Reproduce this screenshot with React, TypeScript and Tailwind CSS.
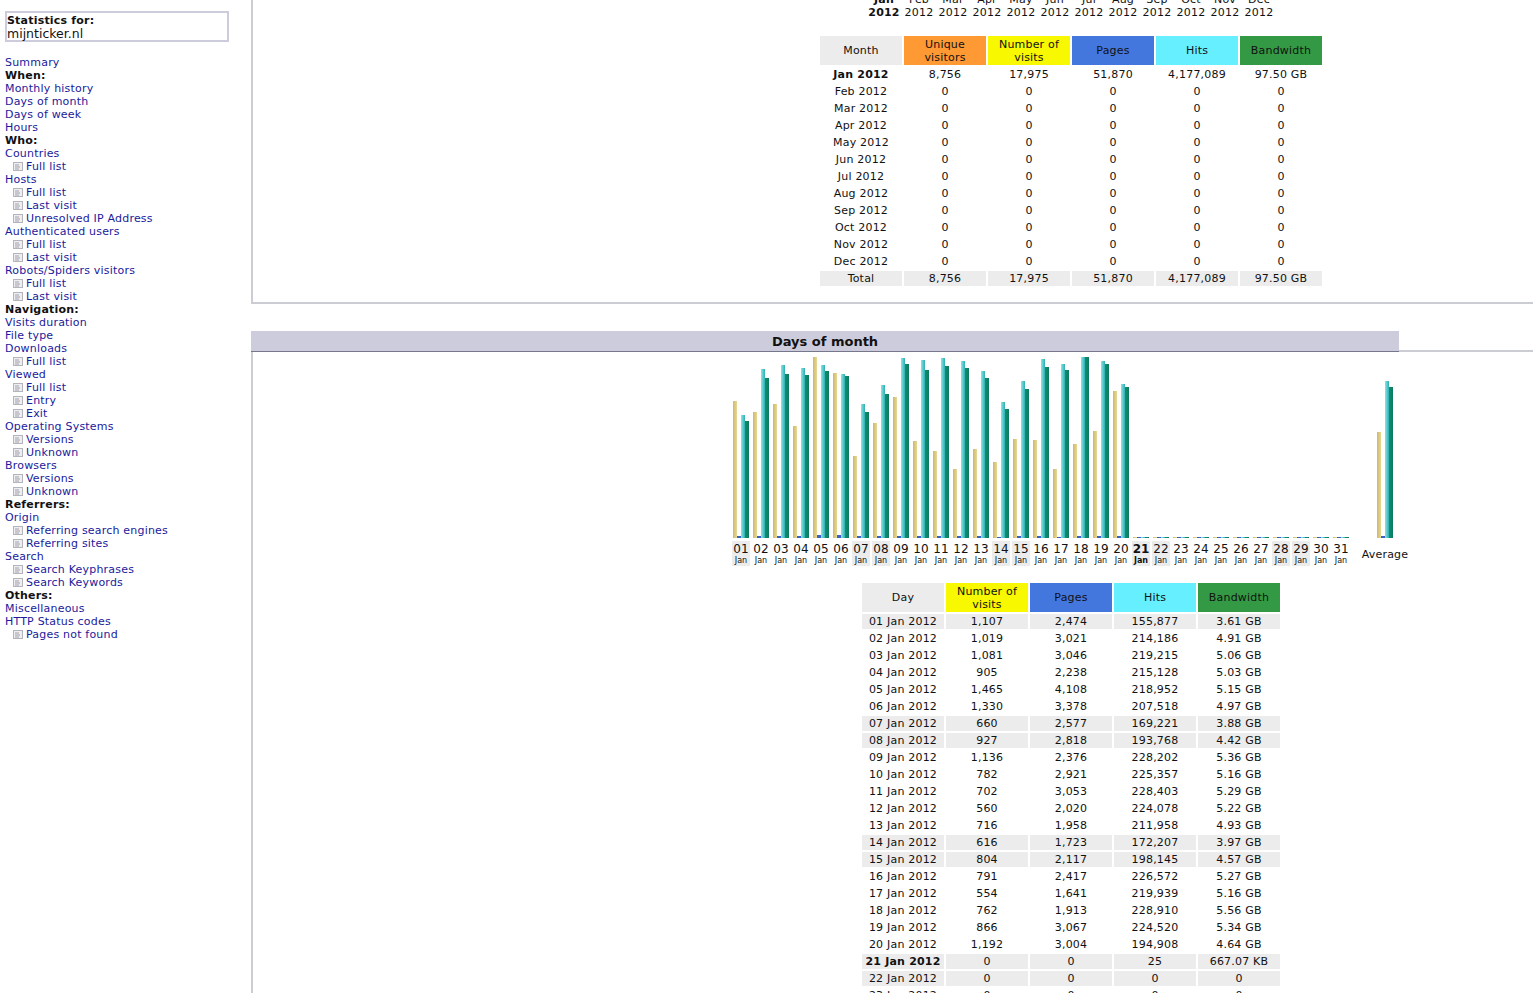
const menu: [string, number][] = [
  ['Summary', 1], ['When:', 0], ['Monthly history', 1], ['Days of month', 1], ['Days of week', 1], ['Hours', 1],
  ['Who:', 0], ['Countries', 1], ['Full list', 2], ['Hosts', 1], ['Full list', 2], ['Last visit', 2],
  ['Unresolved IP Address', 2], ['Authenticated users', 1], ['Full list', 2], ['Last visit', 2],
  ['Robots/Spiders visitors', 1], ['Full list', 2], ['Last visit', 2], ['Navigation:', 0], ['Visits duration', 1],
  ['File type', 1], ['Downloads', 1], ['Full list', 2], ['Viewed', 1], ['Full list', 2], ['Entry', 2], ['Exit', 2],
  ['Operating Systems', 1], ['Versions', 2], ['Unknown', 2], ['Browsers', 1], ['Versions', 2], ['Unknown', 2],
  ['Referrers:', 0], ['Origin', 1], ['Referring search engines', 2], ['Referring sites', 2], ['Search', 1],
  ['Search Keyphrases', 2], ['Search Keywords', 2], ['Others:', 0], ['Miscellaneous', 1], ['HTTP Status codes', 1],
  ['Pages not found', 2],
];

const monthNames = ['Jan', 'Feb', 'Mar', 'Apr', 'May', 'Jun', 'Jul', 'Aug', 'Sep', 'Oct', 'Nov', 'Dec'];

// visits, pages, hits, bandwidth GB, bandwidth label
const days: [number, number, number, number, string][] = [
  [1107, 2474, 155877, 3.61, '3.61 GB'], [1019, 3021, 214186, 4.91, '4.91 GB'], [1081, 3046, 219215, 5.06, '5.06 GB'],
  [905, 2238, 215128, 5.03, '5.03 GB'], [1465, 4108, 218952, 5.15, '5.15 GB'], [1330, 3378, 207518, 4.97, '4.97 GB'],
  [660, 2577, 169221, 3.88, '3.88 GB'], [927, 2818, 193768, 4.42, '4.42 GB'], [1136, 2376, 228202, 5.36, '5.36 GB'],
  [782, 2921, 225357, 5.16, '5.16 GB'], [702, 3053, 228403, 5.29, '5.29 GB'], [560, 2020, 224078, 5.22, '5.22 GB'],
  [716, 1958, 211958, 4.93, '4.93 GB'], [616, 1723, 172207, 3.97, '3.97 GB'], [804, 2117, 198145, 4.57, '4.57 GB'],
  [791, 2417, 226572, 5.27, '5.27 GB'], [554, 1641, 219939, 5.16, '5.16 GB'], [762, 1913, 228910, 5.56, '5.56 GB'],
  [866, 3067, 224520, 5.34, '5.34 GB'], [1192, 3004, 194908, 4.64, '4.64 GB'], [0, 0, 25, 0, '667.07 KB'],
  ...Array.from({ length: 10 }, (): [number, number, number, number, string] => [0, 0, 0, 0, '0']),
];

const grayDays = [1, 7, 8, 14, 15, 21, 22, 28, 29];
const pad = (n: number) => String(n).padStart(2, '0');
const fmt = (n: number) => n.toLocaleString('en-US');

const headerCell = 'h-[29px] w-[82px] px-[3px] py-0 text-center align-middle font-normal leading-[13px]';
const cell = 'h-[15px] p-0 text-center align-middle leading-[13px]';

function MenuIcon() {
  return (
    <svg width="10" height="9" viewBox="0 0 10 9" className="shrink-0">
      <rect x="0.5" y="0.5" width="9" height="8" fill="#eeeef2" stroke="#b4b4bc" />
      <path d="M2 3h4M2 5h5M2 7h4" stroke="#a0a0a8" strokeWidth="1" />
    </svg>
  );
}

function Bars({ v, p, h, b }: { v: number; p: number; h: number; b: number }) {
  return (
    <div className="flex items-end">
      <div className="w-1 bg-linear-to-r from-[#cdb96c] to-[#e6d994]" style={{ height: v }} />
      <div className="w-1 bg-[#3a62c4]" style={{ height: p }} />
      <div className="w-1 bg-linear-to-r from-[#86e6e8] to-[#28aeb0]" style={{ height: h }} />
      <div className="w-1 bg-linear-to-r from-[#0f8e70] to-[#0a7a60]" style={{ height: b }} />
    </div>
  );
}

function HeadRow({ first, cols }: { first: string; cols: [string, string][] }) {
  return (
    <tr>
      <th className={`${headerCell} bg-[#ececec]`}>{first}</th>
      {cols.map(([label, bg]) => (
        <th key={label} className={`${headerCell} ${bg}`}>{label}</th>
      ))}
    </tr>
  );
}

export default function App() {
  return (
    <div className="flex h-[993px] overflow-hidden bg-white text-[11px] leading-[13px] tracking-[0.2px] text-[#111]" style={{ fontFamily: '"DejaVu Sans", Verdana, sans-serif' }}>
      {/* Menu */}
      <div className="w-[251px] shrink-0">
        <div className="ml-[5px] mt-[11px] h-[31px] w-[224px] border-2 border-[#ccccdd] pt-px">
          <div className="font-bold">Statistics for:</div>
          <div className="text-[12.5px] leading-[14px] tracking-normal">mijnticker.nl</div>
        </div>
        <div className="ml-[5px] mt-[14px]">
          {menu.map(([label, kind], i) =>
            kind === 0 ? (
              <div key={i} className="h-[13px] font-bold">{label}</div>
            ) : kind === 1 ? (
              <div key={i} className="h-[13px] text-[#1a1a9c]">{label}</div>
            ) : (
              <div key={i} className="flex h-[13px] items-center gap-[3px] pl-[8px] text-[#1a1a9c]">
                <MenuIcon />
                <span>{label}</span>
              </div>
            ),
          )}
        </div>
      </div>

      {/* Content */}
      <div className="min-w-0 flex-1">
        <div className="flow-root h-[304px] border-b-2 border-l-2 border-[#ccccd4]">
          <div className="ml-[614px] -mt-[7px] flex">
            {monthNames.map((m, i) => (
              <div key={m} className={`text-center ${i === 0 ? 'w-[35px] pr-px font-bold' : 'w-[34px]'}`}>
                <div>{m}</div>
                <div>2012</div>
              </div>
            ))}
          </div>
          <table className="ml-[565px] mt-[15px] border-separate border-spacing-[2px]">
            <thead>
              <HeadRow
                first="Month"
                cols={[
                  ['Unique visitors', 'bg-[#ff9933]'],
                  ['Number of visits', 'bg-[#f8f800]'],
                  ['Pages', 'bg-[#4477dd]'],
                  ['Hits', 'bg-[#66f0ff]'],
                  ['Bandwidth', 'bg-[#339944]'],
                ]}
              />
            </thead>
            <tbody>
              {monthNames.map((m, i) => (
                <tr key={m}>
                  <td className={`${cell} ${i === 0 ? 'font-bold' : ''}`}>{m} 2012</td>
                  <td className={cell}>{i === 0 ? '8,756' : '0'}</td>
                  <td className={cell}>{i === 0 ? '17,975' : '0'}</td>
                  <td className={cell}>{i === 0 ? '51,870' : '0'}</td>
                  <td className={cell}>{i === 0 ? '4,177,089' : '0'}</td>
                  <td className={cell}>{i === 0 ? '97.50 GB' : '0'}</td>
                </tr>
              ))}
              <tr>
                {['Total', '8,756', '17,975', '51,870', '4,177,089', '97.50 GB'].map((t) => (
                  <td key={t} className={`${cell} bg-[#ececec]`}>{t}</td>
                ))}
              </tr>
            </tbody>
          </table>
        </div>

        <div className="mt-[27px] flex items-end">
          <div className="flex h-[21px] w-[1148px] shrink-0 items-center justify-center border-b border-[#77778c] bg-[#ccccdd] text-[13px] font-bold tracking-normal">
            Days of month
          </div>
          <div className="h-[2px] flex-1 bg-[#ccccd4]" />
        </div>

        <div className="h-[700px] border-l-2 border-[#ccccd4]">
          <div className="ml-[478px] flex">
            {days.map(([v, p, h, b], i) => {
              const d = i + 1;
              const gray = grayDays.includes(d);
              return (
                <div key={d} className="w-5">
                  <div className="flex h-[186px] items-end pl-[2px]">
                    <Bars
                      v={Math.max(1, Math.round(v * 0.1237))}
                      p={Math.max(1, Math.round(p * 0.00079))}
                      h={Math.max(1, Math.round(h * 0.00079))}
                      b={Math.max(1, Math.round(b * 32.5))}
                    />
                  </div>
                  <div className={`mx-px mt-[3px] h-[25px] pt-[2px] text-center tracking-normal ${gray ? 'bg-[#ececec]' : ''} ${d === 21 ? 'font-bold' : ''}`}>
                    <div className="text-[12px] leading-[13px]">{pad(d)}</div>
                    <div className="text-[8px] leading-[10px]">Jan</div>
                  </div>
                </div>
              );
            })}
            <div className="ml-[10px] w-[48px]">
              <div className="flex h-[186px] items-end justify-center">
                <Bars v={106} p={2} h={157} b={151} />
              </div>
              <div className="mt-[3px] flex h-[25px] items-center justify-center pt-px">Average</div>
            </div>
          </div>

          <table className="ml-[607px] mt-[15px] border-separate border-spacing-[2px]">
            <thead>
              <HeadRow
                first="Day"
                cols={[
                  ['Number of visits', 'bg-[#f8f800]'],
                  ['Pages', 'bg-[#4477dd]'],
                  ['Hits', 'bg-[#66f0ff]'],
                  ['Bandwidth', 'bg-[#339944]'],
                ]}
              />
            </thead>
            <tbody>
              {days.slice(0, 23).map(([v, p, h, , bw], i) => {
                const d = i + 1;
                const bg = grayDays.includes(d) ? 'bg-[#ececec]' : '';
                return (
                  <tr key={d}>
                    <td className={`${cell} ${bg} ${d === 21 ? 'font-bold' : ''}`}>{pad(d)} Jan 2012</td>
                    <td className={`${cell} ${bg}`}>{fmt(v)}</td>
                    <td className={`${cell} ${bg}`}>{fmt(p)}</td>
                    <td className={`${cell} ${bg}`}>{fmt(h)}</td>
                    <td className={`${cell} ${bg}`}>{bw}</td>
                  </tr>
                );
              })}
            </tbody>
          </table>
        </div>
      </div>
    </div>
  );
}
